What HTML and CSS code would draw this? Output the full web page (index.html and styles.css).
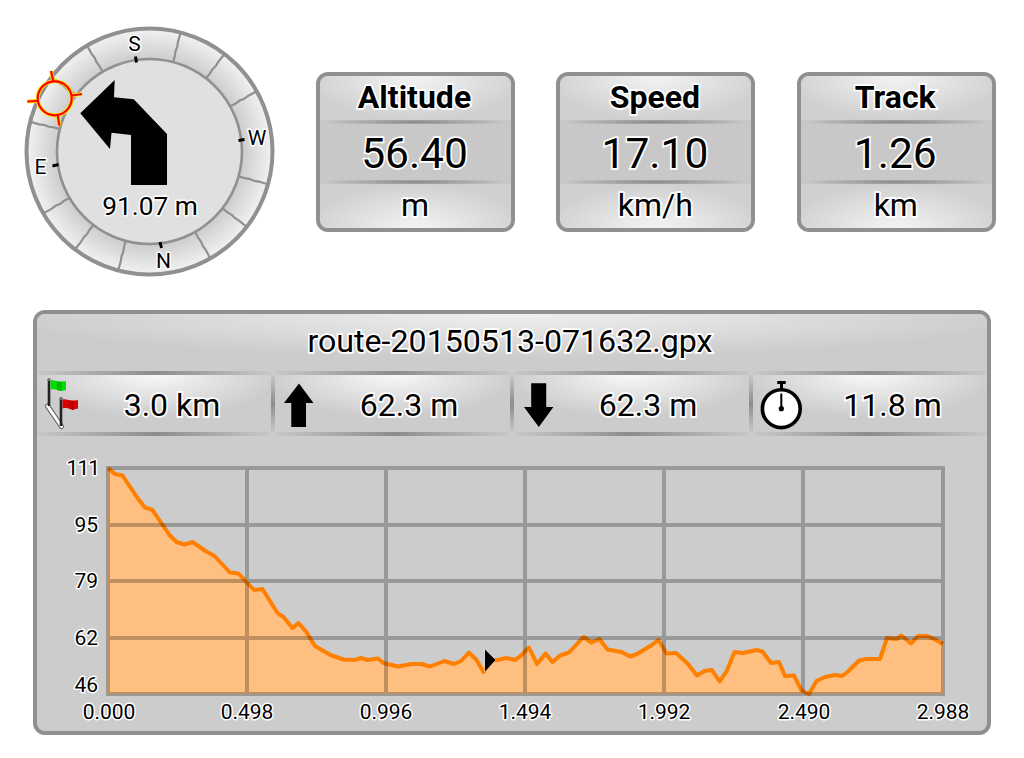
FILE: index.html
```html
<!DOCTYPE html>
<html lang="en">
<head>
    <meta charset="UTF-8">
    <meta name="viewport" content="width=device-width, initial-scale=1.0">
    <title>Route Dashboard</title>
    <link rel="stylesheet" href="styles.css">
</head>
<body>
    <div class="dashboard">
        <div class="top-row">
            <svg class="compass" viewBox="24 26 252 252">
                <defs>
                    <radialGradient id="ring" gradientUnits="userSpaceOnUse" cx="149.5" cy="151.5" r="123">
                        <stop offset="0.75" stop-color="#cccccc"/>
                        <stop offset="1" stop-color="#f2f2f2"/>
                    </radialGradient>
                </defs>
                <circle class="ring-outer" cx="149.5" cy="151.5" r="123" fill="url(#ring)"/>
                <g class="spokes" id="spokes"></g>
                <circle class="ring-inner" cx="149.5" cy="151.5" r="92.5"/>
                <path class="ticks" d="M135.5 56.5 l1 6 M238.5 140.5 l6 -1 M160 242 l1.5 6 M52.5 166 l6 -1.5"/>
                <path d="M114.7 80 L114 97.3 L133.7 99.3 L167 134 V185 H131 V135 L111.5 132.7 L110 149 L80.3 113.3 Z"/>
                <g class="sun sun-glow">
                    <circle cx="54.7" cy="98.3" r="17"/>
                    <path d="M51 71 L53.3 81 M27.3 101.5 L37.5 101 M72 95.5 L82 94 M57.7 115 L59.3 125.5"/>
                </g>
                <g class="sun">
                    <circle cx="54.7" cy="98.3" r="17"/>
                    <path d="M51 71 L53.3 81 M27.3 101.5 L37.5 101 M72 95.5 L82 94 M57.7 115 L59.3 125.5"/>
                </g>
                <g class="outlined small-text">
                    <text x="134.5" y="51">S</text>
                    <text x="257" y="145">W</text>
                    <text x="163.5" y="268">N</text>
                    <text x="40.5" y="174">E</text>
                </g>
                <text class="outlined turn-distance" x="150" y="215">91.07 m</text>
            </svg>

            <div class="cards">
                <div class="card">
                    <div class="card-title outlined">Altitude</div>
                    <div class="rule"></div>
                    <div class="card-value outlined">56.40</div>
                    <div class="rule"></div>
                    <div class="card-unit outlined">m</div>
                </div>
                <div class="card">
                    <div class="card-title outlined">Speed</div>
                    <div class="rule"></div>
                    <div class="card-value outlined">17.10</div>
                    <div class="rule"></div>
                    <div class="card-unit outlined">km/h</div>
                </div>
                <div class="card">
                    <div class="card-title outlined">Track</div>
                    <div class="rule"></div>
                    <div class="card-value outlined">1.26</div>
                    <div class="rule"></div>
                    <div class="card-unit outlined">km</div>
                </div>
            </div>
        </div>

        <div class="route">
            <div class="route-title outlined">route-20150513-071632.gpx</div>

            <div class="stats">
                <div class="stat">
                    <svg class="icon-flags" viewBox="37 375 35 57">
                        <path d="M47.5 406 L61.5 426.5" stroke="#666" stroke-width="5" stroke-linecap="round"/>
                        <path d="M47.5 406 L61.5 426.5" stroke="#fff" stroke-width="3" stroke-linecap="round"/>
                        <path d="M49 379 V406 M61 398 V426" stroke="#222" stroke-width="2.6"/>
                        <circle cx="49" cy="379.5" r="1.6" fill="#777"/>
                        <circle cx="61" cy="398.3" r="1.6" fill="#777"/>
                        <path d="M50.5 380.5 C54 379 58 383 66 381 V390 C60 392.5 56 388 50.5 389.5 Z" fill="#0d0"/>
                        <path d="M57 381.3 C59 382 61 382.2 62 382 V391 C60 391 58 390.5 57 389.8 Z" fill="#0b0"/>
                        <path d="M62.5 399.5 C66 398 70 402 78 400 V408.5 C72 411 68 406.5 62.5 408.5 Z" fill="#d00"/>
                        <path d="M69 400.3 C71 401 73 401.2 74 401 V410 C72 410 70 409.3 69 408.5 Z" fill="#b00"/>
                    </svg>
                    <span class="outlined">3.0 km</span>
                </div>
                <div class="stat">
                    <svg class="icon-arrow" viewBox="275 375 32 57">
                        <path d="M299 383.5 L313.5 403 H306 V427 H291.3 V403 H284 Z"/>
                    </svg>
                    <span class="outlined">62.3 m</span>
                </div>
                <div class="stat">
                    <svg class="icon-arrow" viewBox="514 375 32 57">
                        <path d="M538.8 427 L553.4 407 H546.2 V383.3 H531.2 V407 H524 Z"/>
                    </svg>
                    <span class="outlined">62.3 m</span>
                </div>
                <div class="stat">
                    <svg class="icon-watch" viewBox="753 375 44 57">
                        <path d="M777.3 381 H785.7 V384 H783 V389 H780 V384 H777.3 Z"/>
                        <circle cx="781.3" cy="408.7" r="18.9" fill="#fff" stroke="#000" stroke-width="3.6"/>
                        <path d="M781.3 393.5 V408" stroke="#000" stroke-width="2"/>
                        <circle cx="781.3" cy="408.7" r="2.6"/>
                    </svg>
                    <span class="outlined">11.8 m</span>
                </div>
            </div>

            <svg class="chart" viewBox="37 436 950 295">
                <path class="area" id="area"/>
                <path class="line" id="line"/>
                <path class="grid" d="M106 468 H945 M106 525 H945 M106 581 H945 M106 638 H945 M106 694 H945
                    M108 466 V696 M247 466 V696 M386 466 V696 M525 466 V696 M664 466 V696 M803 466 V696 M943 466 V696"/>
                <path class="position" d="M485 649.5 V671.5 L495.5 660 Z"/>
                <g class="outlined small-text y-labels">
                    <text class="top-label" x="99" y="475">111</text>
                    <text x="98" y="532">95</text>
                    <text x="98" y="588">79</text>
                    <text x="98" y="645">62</text>
                    <text x="98" y="692">46</text>
                </g>
                <g class="outlined small-text">
                    <text x="109" y="719">0.000</text>
                    <text x="247" y="719">0.498</text>
                    <text x="386" y="719">0.996</text>
                    <text x="525" y="719">1.494</text>
                    <text x="664" y="719">1.992</text>
                    <text x="804" y="719">2.490</text>
                    <text x="943" y="719">2.988</text>
                </g>
            </svg>
        </div>
    </div>

    <script>
        // Spokes between the compass points
        const angles = [14.7, 37.6, 60.7, 105.5, 127.8, 150.4, 194.8, 217.3, 239.8, 284, 307.3, 329.5];
        document.getElementById('spokes').innerHTML = angles.map(a =>
            `<path d="M149.5 60 l0.3 -7 l-0.6 -5 l0.6 -5 l-0.6 -5 l0.3 -9" transform="rotate(${a} 149.5 151.5)"/>`
        ).join('');

        // Elevation profile
        const profile = `108,468 115,474 122.5,475.5 137.5,498 145,507.5 152.5,510 169.5,535 176.5,542 184.5,544.5
            192.5,542 205.5,551 214.5,556 230,572.5 238.5,573.5 254,590 262.5,589 277.5,613 283.5,617 292.5,628
            298.5,623 306,631.5 315,646 330.5,655 343.5,659.5 355,660 361,658 367.5,660 378,658.5 383.5,663
            398,666.5 411.5,664 421.5,664 430,666.5 444.5,661 454,664 461,661 469,652.5 476.5,660 483.5,672
            492,660 498,660 506.5,658 515,660 520,656.5 529,647.5 537,664 545.5,653.5 552.5,662 560,655.5
            569,652.5 583.5,637 591.5,642.5 599.5,639 607.5,649.5 621.5,652 630,656.5 637,654 651,645.5
            658.5,640 666.5,653.5 676,653 688,664 697,675.5 704.5,671 712,670 719.5,681.5 726.5,671.5
            734.5,652 743,653 756.5,650 762.5,651.5 771,663 779,662 785,676 794,675.5 801.5,690.5 809,694
            816.5,681 825,677 835,675 842,676 848,671.5 859,660.5 866,659 880,659 887,638 896.5,639 901.5,635.5
            911,643.5 918,636 927.5,636 935,639.5 943,644`;
        document.getElementById('line').setAttribute('d', 'M' + profile);
        document.getElementById('area').setAttribute('d', 'M' + profile + ' V694 H108 Z');
    </script>
</body>
</html>
```

FILE: styles.css
```css
* {
    margin: 0;
    padding: 0;
    box-sizing: border-box;
}

:root {
    --edge: #909090;
    --panel: #cccccc;
    --card: #c8c8c8;
    --line: #ff8000;
}

body {
    font-family: Roboto, sans-serif;
    background: #fff;
    color: #000;
}

.dashboard {
    padding: 26px 28px 0 24px;
}

.top-row {
    display: flex;
    align-items: flex-start;
    gap: 40px;
}

.compass {
    width: 252px;
    height: 252px;
    flex: none;
}

.cards {
    display: grid;
    grid-template-columns: 199px 199px 199px;
    justify-content: space-between;
    width: 679.8px;
    margin-top: 46px;
}

.ring-outer {
    stroke: var(--edge);
    stroke-width: 4;
}

.ring-inner {
    fill: #e0e0e0;
    stroke: var(--edge);
    stroke-width: 2.6;
}

.spokes path {
    fill: none;
    stroke: var(--edge);
    stroke-width: 2.2;
}

.ticks {
    stroke: #000;
    stroke-width: 3;
}

.sun {
    fill: none;
    stroke: #f00;
    stroke-width: 2.2;
}

.sun-glow {
    stroke: #ffe600;
    stroke-width: 4;
}

/* black text with a white halo */
.outlined {
    -webkit-text-stroke: 3.4px #fff;
    paint-order: stroke fill;
}

/* svg text takes the halo from the stroke properties */
svg .outlined {
    stroke: #fff;
    stroke-width: 3px;
    stroke-linejoin: round;
}

.small-text {
    font-size: 21px;
    text-anchor: middle;
}

.y-labels {
    text-anchor: end;
}

.top-label {
    letter-spacing: -1px;
}

.turn-distance {
    font-size: 26.3px;
    text-anchor: middle;
}

.card {
    height: 160px;
    border: 4px solid var(--edge);
    border-radius: 12px;
    background: var(--card);
    display: flex;
    flex-direction: column;
    text-align: center;
}

.card-title {
    height: 44px;
    line-height: 42px;
    font-size: 32px;
    font-weight: 700;
    padding-right: 2px;
    border-radius: 8px 8px 0 0;
    background: radial-gradient(ellipse 110px 44px at 50% 0, #f4f4f4, #d0d0d0);
}

.card-value {
    height: 56px;
    line-height: 60px;
    font-size: 42.5px;
    padding-right: 2px;
}

.card-unit {
    height: 44px;
    line-height: 42px;
    font-size: 32px;
    padding-right: 1px;
    border-radius: 0 0 8px 8px;
    background: radial-gradient(ellipse 110px 44px at 50% 100%, #f4f4f4, #d0d0d0);
}

.rule {
    height: 4px;
    background: radial-gradient(ellipse 50% 100% at 50% 50%, #888, var(--card));
}

.route {
    width: 958px;
    height: 425px;
    margin: 32px 0 0 9px;
    border: 4px solid var(--edge);
    border-radius: 12px;
    background: var(--panel);
}

.route-title {
    height: 57px;
    line-height: 55px;
    font-size: 32.15px;
    text-align: center;
    padding-right: 4px;
    border-radius: 8px 8px 0 0;
    background: radial-gradient(ellipse 520px 44px at 50% 0, #f0f0f0, var(--panel));
}

.stats {
    display: grid;
    grid-template-columns: 234px 235px 235px 234px;
    column-gap: 4px;
}

.stat {
    position: relative;
    height: 65px;
    padding: 4px 0;
    display: flex;
    align-items: center;
    font-size: 32px;
    background:
        linear-gradient(90deg, #c8c8c8, #8c8c8c 50%, #c8c8c8) 0 0 / 100% 4px no-repeat,
        linear-gradient(90deg, #c8c8c8, #8c8c8c 50%, #c8c8c8) 0 100% / 100% 4px no-repeat,
        radial-gradient(ellipse 125px 42px at 50% 4px, #f8f8f8, var(--panel));
}

/* separator that sits in the column gap */
.stat + .stat::before {
    content: "";
    position: absolute;
    left: -4px;
    top: 4px;
    width: 4px;
    height: 57px;
    background: linear-gradient(#c8c8c8, #8c8c8c 50%, #c8c8c8);
}

.stat span {
    flex: 1;
    text-align: center;
    line-height: 53px;
    padding: 4px 0 0 1px;
}

.stat svg {
    height: 57px;
    overflow: visible;
    flex: none;
    fill: #000;
}

.icon-flags {
    width: 35px;
}

.icon-arrow {
    width: 32px;
}

.icon-watch {
    width: 44px;
}

.chart {
    display: block;
    width: 950px;
    height: 295px;
}

.grid {
    fill: none;
    stroke: rgba(0, 0, 0, 0.25);
    stroke-width: 4;
}

.area {
    fill: #ffbf80;
}

.line {
    fill: none;
    stroke: var(--line);
    stroke-width: 4;
    stroke-linejoin: round;
}

.position {
    stroke: #ddd;
    stroke-width: 1;
    paint-order: stroke;
}
```
